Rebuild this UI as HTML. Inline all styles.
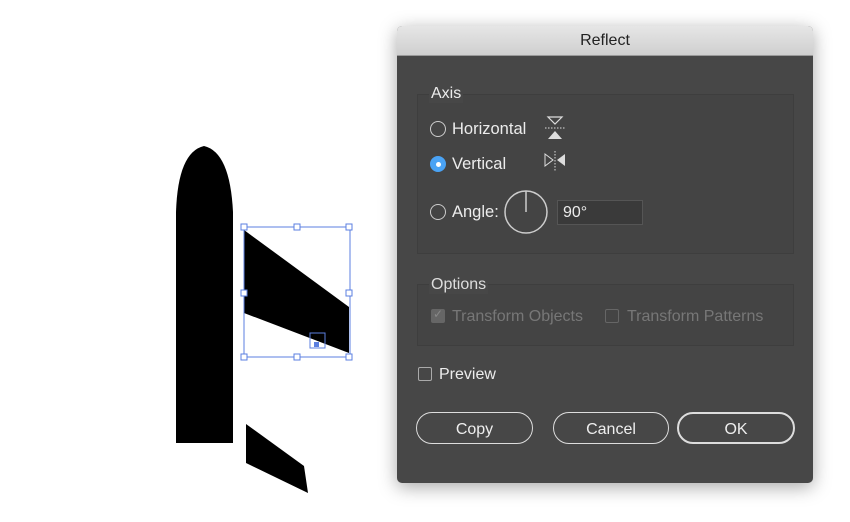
<!DOCTYPE html><html><head><style>
body{margin:0;width:850px;height:522px;background:#fff;position:relative;overflow:hidden;font-family:"Liberation Sans",sans-serif}
.dlg{position:absolute;left:397px;top:26px;width:416px;height:457px;background:#474747;border-radius:5px;box-shadow:0 4px 18px rgba(0,0,0,.35);overflow:hidden}
.title{height:29px;background:linear-gradient(#e6e6e6,#cfcfcf);border-bottom:1px solid #999;text-align:center;font-size:16px;line-height:30px;color:#222}
.t{position:absolute;color:#ececec;font-size:16px}
.box{position:absolute;border:1px solid #3e3e3e;background:#444}
.rad{position:absolute;width:14px;height:14px;border:1.5px solid #ccc;border-radius:50%}
.btn{position:absolute;height:30px;border:1.5px solid #ddd;border-radius:16px;color:#eee;font-size:16px;text-align:center;line-height:33px}
.cb{position:absolute;width:12px;height:12px;border:1.5px solid #888;border-radius:2px}
</style></head><body>
<svg width="400" height="522" style="position:absolute;left:0;top:0">
<path d="M176 443V212Q178 152 204 146Q230 152 233 212V443Z" fill="#000"/>
<polygon points="244,230 349,307 349,353 244,313" fill="#000"/>
<polygon points="246,424 304,466 308,493 246,463" fill="#000"/>
<rect x="244" y="227" width="106" height="130" fill="none" stroke="#5b7fe0" stroke-width="1"/>
<g fill="#fff" stroke="#5b7fe0"><rect x="241" y="224" width="6" height="6"/><rect x="294" y="224" width="6" height="6"/><rect x="346" y="224" width="6" height="6"/><rect x="241" y="290" width="6" height="6"/><rect x="346" y="290" width="6" height="6"/><rect x="241" y="354" width="6" height="6"/><rect x="294" y="354" width="6" height="6"/><rect x="346" y="354" width="6" height="6"/></g>
<rect x="310" y="333" width="15" height="15" fill="none" stroke="#5b7fe0"/><rect x="314" y="342" width="5" height="5" fill="#5b7fe0"/>
</svg>
<div class="dlg">
<div class="title">Reflect</div>
<div class="box" style="left:20px;top:68px;width:375px;height:158px"></div>
<div class="t" style="left:32px;top:59px;background:#474747;padding:0 2px">Axis</div>
<div class="rad" style="left:33px;top:95px"></div><div class="t" style="left:55px;top:94px;font-size:16.5px">Horizontal</div>
<div class="rad" style="left:33px;top:130px;background:#4aa3f5;border-color:#4aa3f5"></div><div style="position:absolute;left:39px;top:136px;width:5px;height:5px;border-radius:50%;background:#fff"></div>
<div class="t" style="left:55px;top:129px;font-size:16.5px">Vertical</div>
<div class="rad" style="left:33px;top:178px"></div><div class="t" style="left:55px;top:177px;font-size:16.5px">Angle:</div>
<svg style="position:absolute;left:145px;top:88px" width="30" height="60"><polygon points="6,3 20,3 13,10" fill="none" stroke="#ddd" stroke-width="1.2"/><line x1="3" y1="14" x2="23" y2="14" stroke="#ddd" stroke-dasharray="1.5 1.5"/><polygon points="6,25 20,25 13,17" fill="#ddd"/>
<polygon points="3,40 11,46 3,52" fill="none" stroke="#ddd"/><line x1="13" y1="37" x2="13" y2="57" stroke="#ddd" stroke-dasharray="1.5 1.5"/><polygon points="23,40 15,46 23,52" fill="#ddd"/></svg>
<svg style="position:absolute;left:106px;top:163px" width="46" height="46"><circle cx="23" cy="23" r="21" fill="none" stroke="#ccc" stroke-width="1.5"/><line x1="23" y1="2" x2="23" y2="23" stroke="#ccc" stroke-width="1.5"/></svg>
<div style="position:absolute;left:160px;top:174px;width:84px;height:23px;background:#3a3a3a;border:1px solid #555"></div>
<div class="t" style="left:166px;top:178px">90°</div>
<div class="box" style="left:20px;top:258px;width:375px;height:60px"></div>
<div class="t" style="left:32px;top:250px;background:#474747;padding:0 2px;color:#ddd">Options</div>
<div class="cb" style="left:34px;top:283px;background:#666;border-color:#666"></div><div class="t" style="left:36px;top:281px;font-size:12px;color:#888">✓</div>
<div class="t" style="left:55px;top:282px;color:#777">Transform Objects</div>
<div class="cb" style="left:208px;top:283px;border-color:#666"></div>
<div class="t" style="left:230px;top:282px;color:#777">Transform Patterns</div>
<div class="cb" style="left:21px;top:341px;border-color:#aaa"></div>
<div class="t" style="left:42px;top:340px">Preview</div>
<div class="btn" style="left:19px;top:386px;width:115px">Copy</div>
<div class="btn" style="left:156px;top:386px;width:114px">Cancel</div>
<div class="btn" style="left:280px;top:386px;width:114px;border-width:2.5px;height:28px;line-height:31px">OK</div>
</div>
</body></html>
